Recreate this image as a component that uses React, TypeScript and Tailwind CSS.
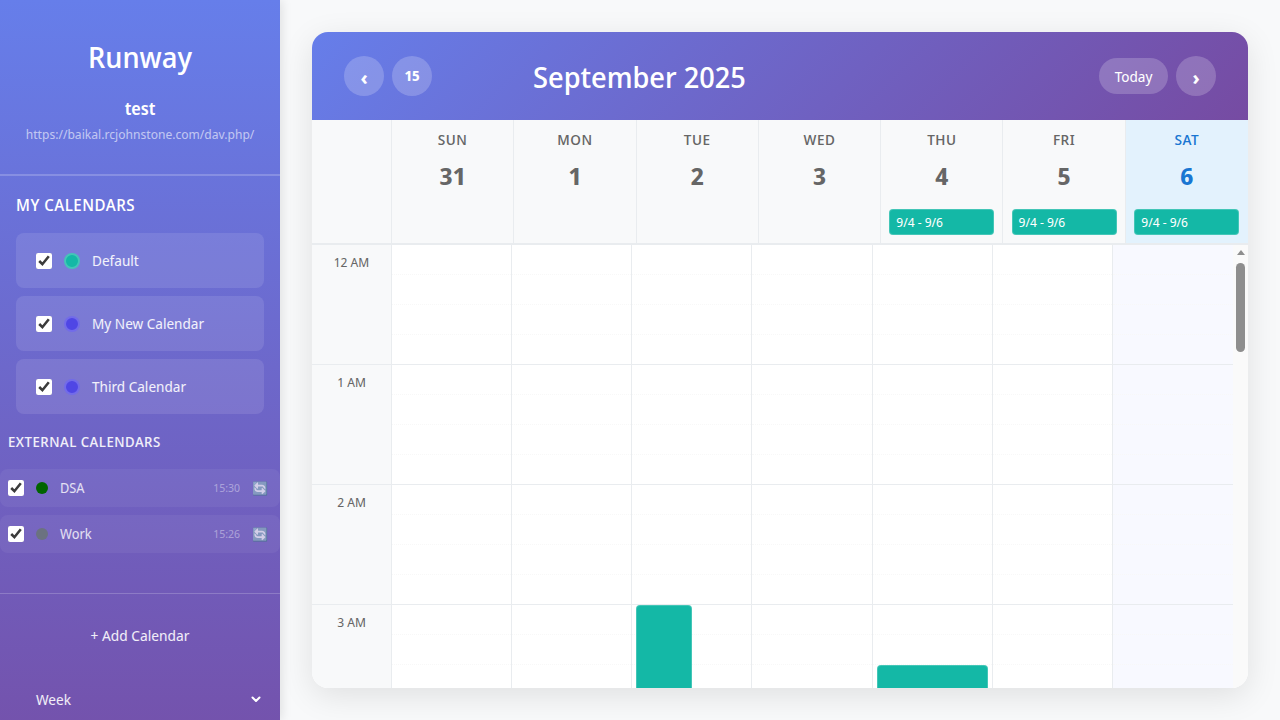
const font = { fontFamily: '"Noto Sans Display", "Open Sans", sans-serif' };

const days = [
  { name: "SUN", date: "31" },
  { name: "MON", date: "1" },
  { name: "TUE", date: "2" },
  { name: "WED", date: "3" },
  { name: "THU", date: "4", chip: true },
  { name: "FRI", date: "5", chip: true },
  { name: "SAT", date: "6", chip: true, today: true },
];

const hours = ["12 AM", "1 AM", "2 AM", "3 AM"];

const myCalendars = [
  { name: "Default", dot: "bg-[#14b8a6]" },
  { name: "My New Calendar", dot: "bg-[#4f46e5]" },
  { name: "Third Calendar", dot: "bg-[#4f46e5]" },
];

const externalCalendars = [
  { name: "DSA", dot: "bg-[#006400]", time: "15:30" },
  { name: "Work", dot: "bg-[#6b7280]", time: "15:26" },
];

const Sidebar = () => (
  <aside className="flex h-[720px] w-[280px] shrink-0 flex-col overflow-hidden bg-[linear-gradient(180deg,#667eea_0px,#764ba2_850px)] text-white shadow-[2px_0_10px_rgba(0,0,0,0.1)]">
    <div className="flex h-[176px] shrink-0 flex-col items-center border-b-2 border-white/20">
      <h1 className="mt-[36px] text-[28.8px] font-medium leading-[42px]">Runway</h1>
      <div className="mt-[19px] text-[17px] font-semibold leading-6">test</div>
      <div className="mt-[4px] text-[12.8px] leading-[18px] text-white/60">https://baikal.rcjohnstone.com/dav.php/</div>
    </div>

    <h3 className="mt-[17px] px-4 text-base font-medium leading-6 tracking-[0.5px]">MY CALENDARS</h3>
    <div className="mt-4 flex flex-col gap-2 px-4">
      {myCalendars.map((c) => (
        <div key={c.name} className="flex h-[55px] items-center rounded-lg bg-white/10 pl-5">
          <input type="checkbox" defaultChecked className="h-4 w-4 accent-white" readOnly />
          <span className={`ml-3 h-4 w-4 rounded-full border-2 border-white/20 ${c.dot}`} />
          <span className="ml-3 text-[14.4px] text-white/90">{c.name}</span>
        </div>
      ))}
    </div>

    <h3 className="mt-[17px] px-2 text-sm font-medium leading-[21px] tracking-[0.5px] text-white/90">EXTERNAL CALENDARS</h3>
    <div className="mt-[17px] flex flex-col gap-2">
      {externalCalendars.map((c) => (
        <div key={c.name} className="flex h-[38px] items-center rounded-lg bg-white/5 pl-2 pr-3">
          <input type="checkbox" defaultChecked className="h-4 w-4 accent-white" readOnly />
          <span className={`ml-3 h-3 w-3 rounded-full ${c.dot}`} />
          <span className="ml-3 flex-1 text-[13.6px] text-white/80">{c.name}</span>
          <span className="text-[11.2px] text-white/40">{c.time}</span>
          <span className="ml-3 text-[13px] leading-none opacity-70">🔄</span>
        </div>
      ))}
    </div>

    <div className="mt-[40px] flex h-[84px] shrink-0 items-center justify-center border-t border-white/20 text-[14.6px] text-white/90">
      + Add Calendar
    </div>
    <div className="relative mt-[-1px] px-9 pt-[5px] text-[14.4px] leading-[38px] text-white/90">
      Week
      <svg className="absolute right-[18px] top-[17px] h-3 w-3" viewBox="0 0 12 12" fill="none" stroke="white" strokeWidth="2" strokeLinecap="round" strokeLinejoin="round">
        <path d="M2.5 4.5 6 8l3.5-3.5" />
      </svg>
    </div>
  </aside>
);

const CircleButton = ({ children, className }: { children: string; className?: string }) => (
  <button className={`flex h-10 w-10 items-center justify-center rounded-full bg-white/20 text-white ${className ?? ""}`}>
    {children}
  </button>
);

const CalendarHeader = () => (
  <div className="flex h-[88px] shrink-0 items-center bg-[linear-gradient(135deg,#667eea,#764ba2)] px-8 text-white">
    <div className="flex gap-2">
      <CircleButton className="pt-[3px] text-xl font-bold">‹</CircleButton>
      <CircleButton className="text-sm font-bold">15</CircleButton>
    </div>
    <h2 className="ml-[101px] pt-[2px] text-[28.8px] font-medium leading-[42px]">September 2025</h2>
    <div className="ml-auto flex items-center gap-2">
      <button className="h-9 w-[69px] rounded-full bg-white/20 pt-[1px] text-[14.4px] text-white">Today</button>
      <CircleButton className="pt-[3px] text-xl font-bold">›</CircleButton>
    </div>
  </div>
);

const DayHeader = () => (
  <div className="grid h-[125px] shrink-0 grid-cols-[80px_repeat(7,1fr)] border-b-2 border-[#e9ecef] bg-[#f8f9fa]">
    <div className="border-r border-[#e9ecef]" />
    {days.map((d) => (
      <div
        key={d.name}
        className={`flex flex-col items-center border-[#e9ecef] pt-[9px] ${d.today ? "bg-[#e3f2fd] text-[#1976d2]" : "border-r text-[#666666]"}`}
      >
        <div className="text-[14.4px] font-medium leading-[21px] tracking-[0.5px]">{d.name}</div>
        <div className="mt-[8px] text-2xl font-bold leading-9">{d.date}</div>
        {d.chip && (
          <div className="mt-[15px] h-[26px] w-[105px] rounded border border-white/20 bg-[#14b8a6] pl-[6px] text-[12.8px] leading-[24px] text-white">
            9/4 - 9/6
          </div>
        )}
      </div>
    ))}
  </div>
);

const HourRow = ({ today }: { today: boolean }) => (
  <div className={`h-[120px] border-b border-[#e9ecef] ${today ? "bg-[#f8f9ff]" : ""}`}>
    {[0, 1, 2].map((i) => (
      <div key={i} className="h-[30px] border-b border-dotted border-[#f8f8f8]" />
    ))}
  </div>
);

const Scrollbar = () => (
  <div className="flex w-[15px] shrink-0 flex-col items-center bg-[#fafafa]">
    <div className="mt-[5px] h-0 w-0 border-x-[4.5px] border-b-[5px] border-x-transparent border-b-[#8e8e8e]" />
    <div className="mt-[8px] h-[89px] w-[9px] rounded-full bg-[#8e8e8e]" />
  </div>
);

const TimeGrid = () => (
  <div className="flex min-h-0 flex-1">
    <div className="grid flex-1 grid-cols-[80px_repeat(7,1fr)] overflow-hidden">
      <div className="border-r border-[#e9ecef] bg-[#f8f9fa]">
        {hours.map((h) => (
          <div key={h} className="h-[120px] border-b border-[#e9ecef] pt-[8px] text-center text-[12.8px] leading-[18px] text-[#666666]">
            {h}
          </div>
        ))}
      </div>
      {days.map((d, col) => (
        <div key={d.name} className="relative border-r border-[#e9ecef] last:border-r-0">
          {hours.map((h) => (
            <HourRow key={h} today={!!d.today} />
          ))}
          {col === 2 && (
            <div className="absolute left-[4px] top-[360px] h-[240px] w-[56px] rounded border border-white/20 bg-[#14b8a6]" />
          )}
          {col === 4 && (
            <div className="absolute left-[4px] top-[420px] h-[120px] w-[111px] rounded border border-white/20 bg-[#14b8a6]" />
          )}
        </div>
      ))}
    </div>
    <Scrollbar />
  </div>
);

export default function App() {
  return (
    <div className="flex h-[720px] w-[1280px] overflow-hidden bg-[#f8f9fa]" style={font}>
      <Sidebar />
      <main className="flex-1 p-8">
        <div className="flex h-[656px] flex-col overflow-hidden rounded-2xl bg-white shadow-[0_8px_32px_rgba(0,0,0,0.1)]">
          <CalendarHeader />
          <DayHeader />
          <TimeGrid />
        </div>
      </main>
    </div>
  );
}
